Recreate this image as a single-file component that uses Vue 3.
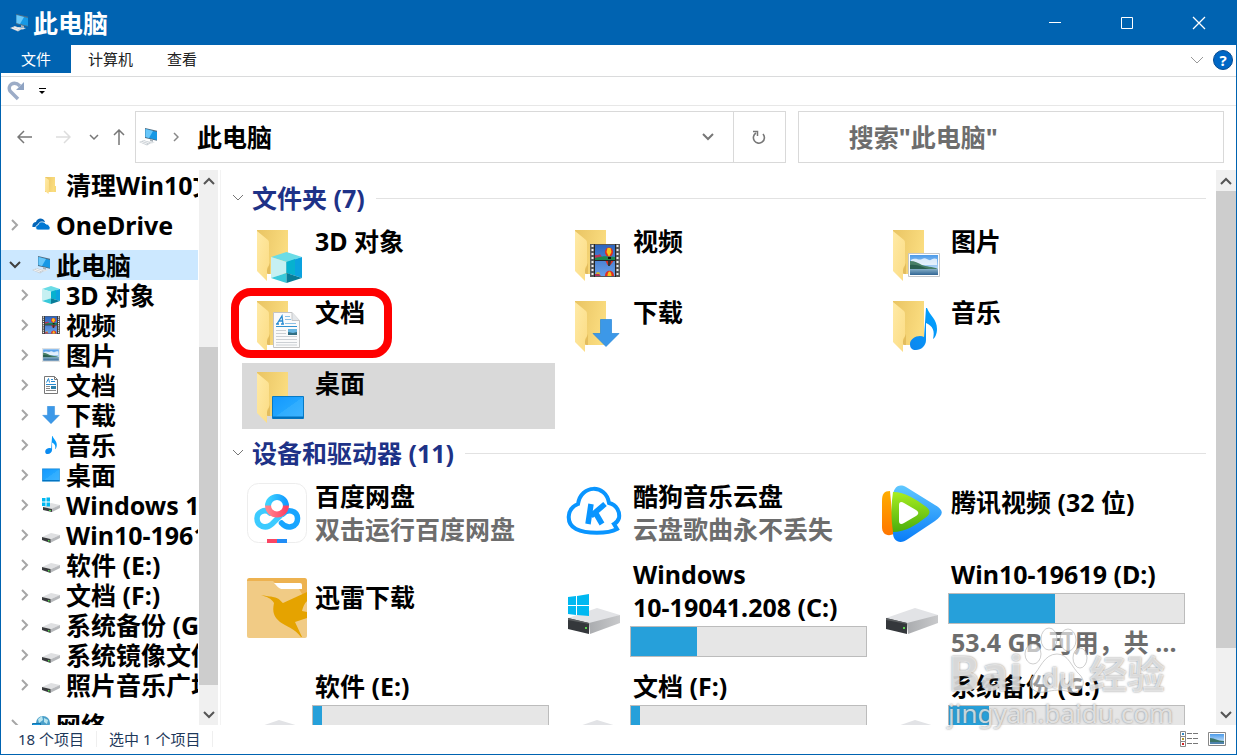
<script setup>
import { ref } from 'vue'

const search = ref('')

const tree = [
  { label: '清理Win10文件', icon: 'folder', level: 2, leaf: true },
  { label: 'OneDrive', icon: 'onedrive', level: 1, gap: true },
  { label: '此电脑', icon: 'pc', level: 1, gap: true, open: true },
  { label: '3D 对象', icon: 'cube', level: 2 },
  { label: '视频', icon: 'film', level: 2 },
  { label: '图片', icon: 'picture', level: 2 },
  { label: '文档', icon: 'smalldoc', level: 2 },
  { label: '下载', icon: 'down', level: 2 },
  { label: '音乐', icon: 'note', level: 2 },
  { label: '桌面', icon: 'desktop', level: 2 },
  { label: 'Windows 10-19041.208 (C:)', icon: 'windrive', level: 2 },
  { label: 'Win10-19619 (D:)', icon: 'drive', level: 2 },
  { label: '软件 (E:)', icon: 'drive', level: 2 },
  { label: '文档 (F:)', icon: 'drive', level: 2 },
  { label: '系统备份 (G:)', icon: 'drive', level: 2 },
  { label: '系统镜像文件 (H:)', icon: 'drive', level: 2 },
  { label: '照片音乐广场 (I:)', icon: 'drive', level: 2 },
  { label: '网络', icon: 'network', level: 1, gap: true }
]

const folders = [
  { name: '3D 对象', icon: 'cube', box: [23, 31, 31, 31] },
  { name: '视频', icon: 'film', box: [24, 23, 30, 33] },
  { name: '图片', icon: 'picture', box: [24, 32, 32, 24] },
  { name: '文档', icon: 'doc', box: [25, 20, 27, 36], marked: true },
  { name: '下载', icon: 'down', box: [26, 27, 28, 28] },
  { name: '音乐', icon: 'note', box: [26, 16, 27, 42] },
  { name: '桌面', icon: 'desktop', box: [24, 33, 32, 23], selected: true }
]

const devices = [
  { name: '百度网盘', icon: 'netdisk', note: '双击运行百度网盘' },
  { name: '酷狗音乐云盘', icon: 'kugou', note: '云盘歌曲永不丢失' },
  { name: '腾讯视频 (32 位)', icon: 'tencent' },
  { name: '迅雷下载', icon: 'xunlei' },
  { name: 'Windows\n10-19041.208 (C:)', icon: 'bigwindrive', used: 28 },
  { name: 'Win10-19619 (D:)', icon: 'bigdrive', used: 45, note: '53.4 GB 可用，共 97.6 GB' },
  { name: '软件 (E:)', icon: 'bigdrive', used: 4, note: '188 GB 可用，共 195 GB' },
  { name: '文档 (F:)', icon: 'bigdrive', used: 4, note: '188 GB 可用，共 195 GB' },
  { name: '系统备份 (G:)', icon: 'bigdrive', used: 17, note: '162 GB 可用，共 195 GB' }
]
</script>

<template>
  <div class="window">
    <svg class="sprite" aria-hidden="true">
      <defs>
        <linearGradient id="gBack" x1="0" x2="1" y1="0" y2="0.3"><stop offset="0" stop-color="#e9c463" /><stop offset="1" stop-color="#fadc7f" /></linearGradient>
        <linearGradient id="gFlap" x1="0" x2="1" y1="0" y2="1"><stop offset="0" stop-color="#ffeaa6" /><stop offset="1" stop-color="#fbdc84" /></linearGradient>
        <linearGradient id="gScreen" x1="0" x2="1" y1="0" y2="1"><stop offset="0" stop-color="#1398ff" /><stop offset="0.5" stop-color="#21a5ff" /><stop offset="0.51" stop-color="#2fadff" /><stop offset="1" stop-color="#3fb3ff" /></linearGradient>
        <linearGradient id="gSky" x1="0" x2="0" y1="0" y2="1"><stop offset="0" stop-color="#4d9be9" /><stop offset="1" stop-color="#e8f5ff" /></linearGradient>
        <linearGradient id="gSea" x1="0" x2="0" y1="0" y2="1"><stop offset="0" stop-color="#86afc8" /><stop offset="1" stop-color="#326694" /></linearGradient>
        <linearGradient id="gFilm" x1="0" x2="0" y1="0" y2="1"><stop offset="0" stop-color="#2d65bd" /><stop offset="1" stop-color="#69a0e8" /></linearGradient>
        <linearGradient id="gNote" x1="0" x2="1" y1="1" y2="0"><stop offset="0" stop-color="#0d86ee" /><stop offset="1" stop-color="#00a2ff" /></linearGradient>
        <linearGradient id="gBlueRing" x1="0" x2="1"><stop offset="0" stop-color="#3ed3ff" /><stop offset="1" stop-color="#139cff" /></linearGradient>
        <linearGradient id="gRedRing" x1="0" x2="1"><stop offset="0" stop-color="#ff838c" /><stop offset="1" stop-color="#ff4265" /></linearGradient>
        <linearGradient id="gTBlue" x1="0" x2="0" y1="0" y2="1"><stop offset="0" stop-color="#60c8ff" /><stop offset="1" stop-color="#087cf8" /></linearGradient>
        <linearGradient id="gTGreen" x1="0" x2="0" y1="0" y2="1"><stop offset="0" stop-color="#a9ed20" /><stop offset="1" stop-color="#4aae0d" /></linearGradient>
        <linearGradient id="gTOrange" x1="0" x2="0" y1="0" y2="1"><stop offset="0" stop-color="#ffad00" /><stop offset="1" stop-color="#ff7600" /></linearGradient>
        <linearGradient id="gMetal" x1="0" x2="1"><stop offset="0" stop-color="#aaacaf" /><stop offset="1" stop-color="#c8c9cb" /></linearGradient>
      </defs>

      <symbol id="i-cube" viewBox="0 0 31 31">
        <path d="M0 5 15.500 0 31 5 15.500 10Z" fill="#6bdce6" />
        <path d="M0 5 15.500 10v11L0 26Z" fill="#c6f0f2" />
        <path d="M31 5 15.500 10v11L31 26Z" fill="#0aa2df" />
        <path d="M15.500 10 24 7v16l-8.500-2Z" fill="#06b1cf" />
        <path d="M0 26 15.500 21v10Z" fill="#39c9da" />
        <path d="M31 26 15.500 21v10Z" fill="#087c98" />
      </symbol>

      <symbol id="i-film" viewBox="0 0 30 33" preserveAspectRatio="none">
        <path fill="#585858" d="M0 0h30v33H0z" />
        <path fill="url(#gFilm)" d="M5 1h20v15H5zM5 17h20v15H5z" />
        <path fill="#b9355b" d="m5 11 3 0 2-1 2 3 3 1v2H5z" /><path fill="#1b864e" d="M5 14c7-2 13-2 20-1v3H5z" />
        <ellipse cx="19" cy="8" rx="4" ry="4.500" fill="#e42b20" /><path d="M17.500 4h3l1 4-2 4h-1l-2-4z" fill="#f6c419" /><path d="M18 13h3v2h-3z" fill="#111" />
        <path d="m15.500 17 8 0-3 4h-3z" fill="#d82c22" /><path d="M18 17h3l-1 5h-2z" fill="#333" />
        <path d="M15 32c0-7 9-7 9 0z" fill="#e12e24" /><path d="M17.500 32c0-6 4-6 4 0z" fill="#f5c51d" /><circle cx="8" cy="30" r="2" fill="#d8b52d" /><path d="M5 30h4l2 2H5z" fill="#b2315a" />
        <path stroke="#eee" stroke-width="2" stroke-dasharray="2 2" d="M2.500 1v32M27.500 1v32" />
        <path fill="#242424" d="M4 0h1v33H4zM25 0h1v33h-1zM5 16h20v1H5z" />
      </symbol>

      <symbol id="i-picture" viewBox="0 0 32 24">
        <path fill="#fff" stroke="#c4c7ca" d="M.5.5h31v23H.5z" />
        <path fill="url(#gSky)" d="M2 2h28v20H2z" />
        <path fill="#fff" opacity=".75" d="M3 7c5-3 8 1 11-1s5 0 7 1 4-3 8-1v6H3z" />
        <path fill="#477f66" d="M2 8c5 0 8 2 12 4s10 1 16 4v1H2z" />
        <path fill="#295f4f" d="M2 12c8-1 14 3 19 4H2z" />
        <path fill="url(#gSea)" d="M2 16h28v6H2z" />
      </symbol>

      <symbol id="i-doc" viewBox="0 0 27 36">
        <path fill="#fafafa" stroke="#c4c4c4" d="M.5.5H19l7.500 8v27H.5z" /><path fill="#e4e7ea" stroke="#c4c6c8" d="M19 .5v8h7.500" />
        <path fill="none" stroke="#278bd2" stroke-width="1.300" d="m4 12 5-8 1 8M6 9h4M3 12h3M8 12h3" />
        <path stroke="#8cc0e4" d="M12 4.500h5M12 7.500h6M12 11.500h11" /><path stroke="#3091d0" d="M3 14.500h21" />
        <path stroke="#ccd0d4" d="M3 18.500h10M3 21.500h10M3 24.500h21M3 27.500h21M3 30.500h21M3 33h21" />
        <path fill="#66b6e2" d="M15 17h9v6h-9z" /><path fill="#326e82" d="m15 20 5 1 4-1v3h-9z" />
      </symbol>
      <symbol id="i-smalldoc" viewBox="0 0 18 18">
        <path fill="#fff" stroke="#777" d="M2.500.5h10l3 3v14h-13z" /><path fill="none" stroke="#777" d="M12.500.5v3h3" />
        <path fill="none" stroke="#278bd2" d="m4.500 6.500 2-4 1 4M9 3.500h2M9 5.500h4M4 8.500h10" />
        <path stroke="#888" d="M4 10.500h4M4 12.500h4M4 14.500h10" /><path fill="#2f82ac" d="M9 10h5v3H9z" />
      </symbol>

      <symbol id="i-down" viewBox="0 0 28 28"><path fill="#3c98e8" stroke="#2586d8" stroke-width=".7" d="M8.500.5h11v14H27L14 27.500 1 14.500h7.500z" /></symbol>
      <symbol id="i-note" viewBox="0 0 27 42"><path fill="url(#gNote)" d="M16 0h1c3 8 10 11 10 21 0 5-2 9-4 10 2-8 0-13-7-16v17c0 6-5 10-10 10-4 0-6-2-6-6 0-6 9-10 14-7z" /></symbol>
      <symbol id="i-desktop" viewBox="0 0 32 23"><path fill="url(#gScreen)" stroke="#087ac4" d="M.5.5h31v22H.5z" /><path stroke="#0070bd" stroke-width="2" d="M1 21.500h30" /></symbol>

      <symbol id="i-folder" viewBox="0 0 18 18"><path fill="url(#gBack)" d="M3 1h10v15H3z" /><path fill="#f8da79" d="M12 10h2v6h-2z" /><path fill="url(#gFlap)" d="m3 1 4 3v10l-.5 4L3 15z" /></symbol>

      <symbol id="i-onedrive" viewBox="0 0 18 18"><path fill="#0365b8" d="M.5 11C-.2 8 2 6 4 6c1-4 7-5 9 0-4 0-5 3-5 5z" /><path fill="#0078d4" stroke="#fff" stroke-width=".8" d="M6 14c-3 0-3-5 0-5 1-4 6-4 8-1 2 0 3 1 3 2 2 1 1 4-1 4z" /></symbol>

      <symbol id="i-pc" viewBox="0 0 18 18">
        <path fill="#516f85" d="M6 0 19 3v10L6 10z" /><path fill="#1698e5" d="m6.500 1 11.500 3v8L6.500 9z" /><path fill="#68c7fa" d="m6.500 1 7.500 2-4 7-3.500-1z" />
        <path fill="#a7b0b7" d="m11 11 3 1v2l-3-1z" /><path fill="#dfe3e6" d="m8 13 8 1-3 1.500-7-1z" /><path fill="#c9cfd4" d="m0 14 5-2 7 3-4 2.500z" /><path stroke="#fff" stroke-width=".7" d="m2 14 6 2M4 13l6 2" />
      </symbol>

      <symbol id="i-drive" viewBox="0 0 18 18"><path fill="#dfe0e2" d="m0 11 9-4 9 2-9 4z" /><path fill="#b7b9bc" d="M8 13.500 18 9v3l-10 5z" /><path fill="#393b3d" d="m0 11 8.500 2v4L0 14z" /><path fill="#50d14d" d="M6 14h1.500v1.500H6z" /></symbol>
      <symbol id="i-windrive" viewBox="0 0 18 18"><path fill="#dfe0e2" d="m1 11 8-4 9 2-8 4z" /><path fill="#b7b9bc" d="M9 13 18 9v3l-8 4z" /><path fill="#393b3d" d="m1 11 9 2v3l-9-2z" /><path fill="#50d14d" d="M7 14h2v1H7z" /><path fill="#00b8f1" d="M0 2h3.500v3.500H0zM4.500 1.500H8v4H4.500zM0 6.500h3.500V10H0zM4.500 6.500H8v4H4.500z" /></symbol>
      <symbol id="i-network" viewBox="0 0 18 18"><circle cx="11" cy="7" r="7" fill="#4b9fc9" /><path fill="#b9e5ef" d="m6 3 4-3 1 4-4 3zM12 2l4 2-1 4-3-2z" /><path fill="#1896df" stroke="#1475ac" d="M.5 7.500h8v8h-8z" /></symbol>

      <symbol id="i-netdisk" viewBox="0 0 64 64">
        <rect x="2.500" y="2.500" width="59" height="59" rx="11" fill="#fff" stroke="#ededed" />
        <g fill="none" stroke-width="5.500" stroke-linecap="round">
          <path d="M38 33c5-6 14-3 14.500 4 .5 9-10 12-16 5" stroke="#18a5ff" />
          <path d="M25 32c-5-5-13-1-13 5.500 0 8 9 11 15 5.500l11-11" stroke="#3ccbff" />
        </g>
        <g fill="none" stroke-width="6"><path d="M23 25a9 9 0 0 1 18 0" stroke="url(#gBlueRing)" /><path d="M23 24.500a9 9 0 0 0 18 0" stroke="url(#gRedRing)" /></g>
        <path fill="#fa4663" d="M22 58h10v4H22z" /><path fill="#218df5" d="M32 58h10v4H32z" />
      </symbol>

      <symbol id="i-kugou" viewBox="0 0 64 64">
        <path fill="none" stroke="#0995ff" stroke-width="4" d="M15 23C18 3 43 3 46 22c8 2 11 9 10 15-1 3-3 5-5 6l3 5c-9 5-31 5-41 0C3 43 3 28 15 23Z" />
        <path fill="none" stroke="#0995ff" stroke-width="5.500" d="m28 23-3 20M42 23 28 35M32 31l7 12" />
      </symbol>

      <symbol id="i-tencent" viewBox="0 0 64 64">
        <path fill="url(#gTOrange)" d="M9 10c-6 0-8 3-8 10v26c0 7 5 10 12 7z" />
        <path fill="url(#gTBlue)" d="M12 16c0-9 5-14 13-10l29 18c10 6 8 10 0 16L27 58c-8 6-15 2-15-6z" />
        <path fill="url(#gTGreen)" d="M12 11c12 0 24 8 32 14 6 4 6 8 0 12-9 7-20 14-32 14-2-13-2-27 0-40z" />
        <path fill="#fff" d="M18 24c0-3 2-4 5-2l12 7c3 2 3 4 0 6l-12 7c-3 2-5 1-5-2z" />
      </symbol>

      <symbol id="i-xunlei" viewBox="0 0 64 64">
        <rect x="2" y="2" width="60" height="60" rx="2" fill="#f1cb85" /><path fill="#edb250" d="M4 2h56l2 2v22L54 13H36l-8-8H2V4z" />
        <path fill="#fff" d="M29 7h26q2 0 2 2v4H36c-3-1-4-3-7-6z" />
        <path fill="#e5a300" d="M16 19c9 2 9 1 12 2 7 1 8 5 10 6l24-11v9c-3 3-4 6-5 10l5 1v6l-12 4 7 15h-1c-6-8-15-11-21-15-6-5-8-10-6-19-3-5-7-6-13-8z" />
      </symbol>

      <symbol id="i-bigdrive" viewBox="0 0 64 64">
        <path fill="#e2e3e6" d="M5 42 34 32l23 7-27 11z" /><path fill="url(#gMetal)" d="M26 47 57 39v8L27 58z" /><path fill="#34373b" d="m5 42 21 5v11L5 53z" /><path fill="#5b5e60" d="m5 42 21 5v1L5 44z" /><path fill="#59d24d" d="M22 51h2v2h-2z" />
      </symbol>
      <symbol id="i-bigwindrive" viewBox="0 0 64 64">
        <use href="#i-bigdrive" /><path fill="#00b8f1" d="m5 21 8-1v9H5zM14 20l12-2v11H14zM5 30h8v9l-8-1zM14 30h12v10l-12-1z" />
      </symbol>
    </svg>

    <header class="titlebar">
      <svg class="icon18"><use href="#i-pc" /></svg>
      <h1>此电脑</h1>
      <div class="controls">
        <button aria-label="最小化"><svg width="14" height="14"><path d="M1 6.500h12" stroke="#fff" /></svg></button>
        <button aria-label="最大化"><svg width="14" height="14"><path d="M1.500 1.500h11v11h-11z" fill="none" stroke="#fff" /></svg></button>
        <button aria-label="关闭"><svg width="14" height="14"><path d="m1 1 12 12M13 1 1 13" stroke="#fff" stroke-width="1.300" /></svg></button>
      </div>
    </header>

    <nav class="tabs">
      <button class="tab active">文件</button>
      <button class="tab">计算机</button>
      <button class="tab">查看</button>
      <div class="tab-tools">
        <button aria-label="展开功能区"><svg width="14" height="10"><path d="m1 2 6 6 6-6" fill="none" stroke="#999" /></svg></button>
        <button class="help" aria-label="帮助">?</button>
      </div>
    </nav>

    <div class="quick">
      <button aria-label="恢复"><svg width="18" height="20"><path d="M11 18 3 10C0 4 7-1 13 5" fill="none" stroke="#9cacc7" stroke-width="3.500" /><path d="M17 1v8H9z" fill="#8fa3c3" /></svg></button>
      <button aria-label="自定义快速访问工具栏"><svg width="8" height="8"><path d="M0 1.500h7" stroke="#000" /><path d="M0 4h6L3 7z" /></svg></button>
    </div>

    <div class="address-row">
      <div class="history">
        <button aria-label="后退"><svg width="16" height="14"><path d="M15 7H1m6-6L1 7l6 6" fill="none" stroke="#777" stroke-width="1.500" /></svg></button>
        <button aria-label="前进"><svg width="16" height="14"><path d="M1 7h14M9 1l6 6-6 6" fill="none" stroke="#ddd" stroke-width="1.500" /></svg></button>
        <button class="recent" aria-label="最近位置"><svg width="10" height="8"><path d="m1 2 4 4 4-4" fill="none" stroke="#777" stroke-width="1.500" /></svg></button>
        <button class="up" aria-label="上移"><svg width="12" height="16"><path d="M6 16V1M1 6l5-5 5 5" fill="none" stroke="#777" stroke-width="1.500" /></svg></button>
      </div>
      <div class="address">
        <svg class="icon18"><use href="#i-pc" /></svg>
        <svg class="crumb" width="6" height="10"><path d="m1 1 4 4-4 4" fill="none" stroke="#888" stroke-width="1.500" /></svg>
        <span class="location">此电脑</span>
        <button class="drop" aria-label="以前的位置"><svg width="12" height="8"><path d="m1 1 5 5 5-5" fill="none" stroke="#777" stroke-width="2" /></svg></button>
        <button class="refresh" aria-label="刷新"><svg width="14" height="15"><path d="M4 3a5.500 5.500 0 1 0 7 1" fill="none" stroke="#777" stroke-width="1.600" /><path d="M1 1.500h4.500V6" fill="none" stroke="#777" stroke-width="1.500" /></svg></button>
      </div>
      <input v-model="search" class="search" type="text" aria-label="搜索" placeholder="搜索&quot;此电脑&quot;" />
    </div>

    <div class="body">
      <aside class="sidebar">
        <ul class="tree">
          <li v-for="(n, i) in tree" :key="i" :class="['node', 'level' + n.level, { gap: n.gap, open: n.open }]">
            <button v-if="!n.leaf" class="expander" :aria-label="'展开 ' + n.label">
              <svg v-if="n.open" width="12" height="8"><path d="m1 1 5 5 5-5" fill="none" stroke="#404040" stroke-width="2" /></svg>
              <svg v-else width="8" height="12"><path d="m1 1 5 5-5 5" fill="none" stroke="#a6a6a6" stroke-width="2" /></svg>
            </button>
            <a href="#"><svg class="icon18"><use :href="'#i-' + n.icon" /></svg><span>{{ n.label }}</span></a>
          </li>
        </ul>
        <div class="scrollbar side">
          <button aria-label="向上滚动"><svg width="12" height="8"><path d="m1 7 5-5 5 5" fill="none" stroke="#555" stroke-width="2" /></svg></button>
          <div class="track"><div class="thumb"></div></div>
          <button aria-label="向下滚动"><svg width="12" height="8"><path d="m1 1 5 5 5-5" fill="none" stroke="#555" stroke-width="2" /></svg></button>
        </div>
      </aside>

      <main class="content">
        <section>
          <h2><svg width="12" height="8"><path d="m1 1 5 5 5-5" fill="none" stroke="#777" /></svg>文件夹 (7)</h2>
          <div class="folders">
            <button v-for="f in folders" :key="f.name" :class="['tile', { selected: f.selected, marked: f.marked }]">
              <svg class="pic" viewBox="0 0 64 66">
                <path fill="url(#gBack)" d="M9 9h31v44H20L9 40z" /><path fill="#d5a949" opacity=".55" d="m19 49 3-7v11h-3z" />
                <path fill="url(#gFlap)" d="m9 10 11 9q1 1 1 3v22l-2 3v13L9 50z" />
                <use :href="'#i-' + f.icon" :x="f.box[0]" :y="f.box[1]" :width="f.box[2]" :height="f.box[3]" />
              </svg>
              <span class="name">{{ f.name }}</span>
            </button>
          </div>
        </section>
        <section>
          <h2 class="second"><svg width="12" height="8"><path d="m1 1 5 5 5-5" fill="none" stroke="#777" /></svg>设备和驱动器 (11)</h2>
          <div class="devices">
            <button v-for="d in devices" :key="d.name" class="tile device">
              <svg class="pic64"><use :href="'#i-' + d.icon" /></svg>
              <span :class="['info', { single: !d.note && !d.used }]">
                <span class="name">{{ d.name }}</span>
                <span v-if="d.used" class="bar" role="progressbar" aria-label="已用空间" :aria-valuenow="d.used" aria-valuemin="0" aria-valuemax="100"><span class="fill" :style="{ width: d.used + '%' }"></span></span>
                <span v-if="d.note" class="note">{{ d.note }}</span>
              </span>
            </button>
          </div>
        </section>
      </main>

      <div class="scrollbar mainbar">
        <button aria-label="向上滚动"><svg width="12" height="8"><path d="m1 7 5-5 5 5" fill="none" stroke="#555" stroke-width="2" /></svg></button>
        <div class="track"><div class="thumb"></div></div>
        <button aria-label="向下滚动"><svg width="12" height="8"><path d="m1 1 5 5 5-5" fill="none" stroke="#555" stroke-width="2" /></svg></button>
      </div>

      <div class="watermark" aria-hidden="true">
        <div class="brand">
          <span>Bai</span>
          <span class="paw">
            <svg width="66" height="70" viewBox="0 0 64 70"><g fill="#fff" fill-opacity=".6" stroke="#b9b9b9" stroke-opacity=".7"><ellipse cx="25" cy="13" rx="8" ry="11" /><ellipse cx="44" cy="14" rx="8" ry="11" /><ellipse cx="9" cy="28" rx="8" ry="10" /><ellipse cx="56" cy="32" rx="7" ry="10" /><path d="M33 28c12 0 14 13 23 21 8 9 0 19-10 17-9-3-16-2-25 0-12 2-19-7-12-16 7-7 11-22 24-22z" /></g></svg>
            <span class="du">du</span>
          </span>
          <span class="cn">经验</span>
        </div>
        <div class="url">jingyan.baidu.com</div>
      </div>
    </div>

    <footer class="status">
      <span>18 个项目</span>
      <span>选中 1 个项目</span>
      <div class="views">
        <button aria-label="详细信息"><svg width="18" height="16"><path d="M.5.5h5v5h-5zM.5 5.500h5v5h-5zM.5 10.500h5v5h-5z" fill="#fff" stroke="#888" /><path d="M2 2h2v2H2z" fill="#378ac4" /><path d="M2 7h2v2H2z" fill="#b49a31" /><path d="M2 12h2v2H2z" fill="#d12525" /><path d="M7 2.500h5m1 0h5M7 7.500h5m1 0h5M7 12.500h5m1 0h5" stroke="#777" /></svg></button>
        <button aria-label="大缩略图"><svg width="18" height="14"><path d="M.5.5h17v13H.5z" fill="#fff" stroke="#888" /><path d="M2 2h14v10H2z" fill="url(#gSky)" /><path d="M2 6c5 0 7 3 14 3v3H2z" fill="#3b7468" /><path d="M2 10h14v2H2z" fill="#4d82ac" /></svg></button>
      </div>
    </footer>
  </div>
</template>

<style>
body { margin: 0; overflow: hidden; }
</style>

<style scoped>
.window { box-sizing: border-box; height: 100vh; display: flex; flex-direction: column; border: 1px solid #0063b1; border-top: 0; background: #fff; color: #000; font: 700 25px/34px "Noto Sans", "Noto Sans CJK SC", sans-serif; }
.sprite { position: absolute; width: 0; height: 0; }
button { border: 0; padding: 0; margin: 0; background: none; font: inherit; color: inherit; display: flex; align-items: center; justify-content: center; }
svg { display: block; flex: none; }
.icon18 { width: 18px; height: 18px; }
.titlebar { flex: none; height: 45px; display: flex; align-items: center; background: #0063b1; color: #fff; padding: 0 1px 0 9px; }
h1 { margin: 0 0 0 5px; font: inherit; }
.controls { margin-left: auto; display: flex; height: 100%; }
.controls button { width: 72px; }
.tabs { flex: none; height: 31px; display: flex; align-items: flex-start; border-bottom: 1px solid #dadbdc; font-weight: 400; font-size: 15px; color: #222; }
.tab { height: 28px; padding: 0 17px; line-height: 28px; }
.tab.active { background: #0063b1; color: #fff; padding: 0 20px; }
.tab-tools { margin-left: auto; display: flex; align-items: center; height: 30px; gap: 9px; padding-right: 3px; }
.help { width: 20px; height: 20px; border-radius: 50%; background: #0067c5; border: 1px solid #064b91; color: #fff; line-height: 18px; font-weight: 700; }
.quick { flex: none; height: 28px; border-bottom: 1px solid #e7e7e7; display: flex; align-items: center; gap: 14px; padding-left: 6px; }
.address-row { flex: none; display: flex; height: 52px; padding: 5px 12px 7px 0; }
.history { width: 134px; display: flex; align-items: center; padding-left: 16px; box-sizing: border-box; gap: 22px; }
.history .recent { margin-left: -4px; }
.history .up { margin-left: -8px; }
.address { flex: 649; display: flex; align-items: center; border: 1px solid #d9d9d9; padding-left: 3px; box-sizing: border-box; min-width: 0; }
.crumb { margin: 0 18px 0 16px; }
.drop { margin-left: auto; width: 50px; height: 100%; }
.refresh { width: 52px; height: 100%; border-left: 1px solid #d9d9d9; box-sizing: border-box; }
.search { flex: 326; min-width: 0; margin-left: 12px; border: 1px solid #d9d9d9; padding: 0 50px; box-sizing: border-box; font: inherit; color: #000; background: #fff; }
.search::placeholder { color: #6d6d6d; opacity: 1; }
.body { flex: 1; min-height: 0; display: flex; position: relative; }
.sidebar { width: 219px; flex: none; display: flex; border-right: 1px solid #f3f3f3; }
.tree { flex: 1; min-width: 0; margin: 0; padding: 0; list-style: none; overflow: hidden; }
.node { display: flex; align-items: center; height: 30px; line-height: 30px; }
.node a { display: flex; align-items: center; gap: 6px; color: inherit; text-decoration: none; white-space: nowrap; }
.gap { margin-top: 10px; }
.open { background: #cce8ff; }
.expander { width: 12px; flex: none; }
.level1 { padding-left: 8px; }
.level1 a { margin-left: 11px; }
.level2 { padding-left: 18px; }
.level2 a { margin-left: 11px; }
.level2 > a:first-child { margin-left: 23px; }
.scrollbar { flex: none; display: flex; flex-direction: column; background: #f0f0f0; width: 19px; }
.scrollbar button { height: 21px; flex: none; }
.track { flex: 1; display: flex; flex-direction: column; }
.thumb { background: #cdcdcd; }
.side { margin: 0 2px 0 1px; }
.side .track { padding-top: 156px; }
.side .thumb { height: 338px; }
.mainbar { width: 20px; }
.mainbar .thumb { height: 457px; }
.content { flex: 1; min-width: 0; overflow: hidden; }
h2 { margin: 11px 10px 6px 11px; display: flex; align-items: center; gap: 8px; font: inherit; color: #1e3287; }
h2::after { content: ""; height: 1px; background: #e2e2e2; flex: 1; margin-left: 3px; }
h2.second { margin-top: 7px; }
.folders, .devices { display: grid; grid-template-columns: repeat(auto-fill, 313px); gap: 5px; padding-left: 21px; }
.tile { position: relative; display: flex; align-items: flex-start; justify-content: flex-start; text-align: left; height: 66px; padding-left: 6px; }
.pic { width: 64px; height: 66px; }
.pic64 { width: 64px; height: 64px; margin-left: -3px; }
.folders .name { margin: 3px 0 0 3px; }
.selected { background: #d9d9d9; }
.marked::after { content: ""; position: absolute; box-sizing: border-box; left: -11px; top: -4px; width: 161px; height: 70px; border: 8px solid #f00; border-radius: 20px; }
.devices { grid-template-rows: 66px 100px 100px; gap: 12px 5px; padding-top: 4px; }
.device { height: auto; align-items: center; }
.info { flex: 1; min-width: 0; display: flex; flex-direction: column; line-height: 33px; padding: 0 1px 0 3px; }
.info > .name { white-space: pre-line; }
.info > .name, .info > .note { padding-left: 3px; }
.single { padding-bottom: 22px; }
.note { color: #6d6d6d; overflow: hidden; text-overflow: ellipsis; white-space: nowrap; }
.bar { display: block; width: 235px; height: 29px; border: 1px solid #bcbcbc; background: #e6e6e6; margin: 2px 0; }
.fill { display: block; height: 100%; background: #26a0da; }
.watermark { position: absolute; right: 64px; bottom: -5px; width: 224px; color: rgba(255, 255, 255, 0.7); text-shadow: 0 0 2px rgba(100, 100, 100, 0.8); pointer-events: none; }
.brand { display: flex; align-items: flex-end; font-size: 48px; line-height: 46px; }
.paw { position: relative; width: 66px; }
.du { position: absolute; left: 19px; bottom: 3px; font-size: 26px; line-height: 30px; }
.cn { font-size: 38px; }
.url { font-weight: 400; font-size: 26px; line-height: 34px; }
.status { flex: none; box-sizing: border-box; height: 29px; display: flex; align-items: center; font-weight: 400; font-size: 15px; color: #1e395b; padding: 0 10px 2px 17px; }
.status > span { border-right: 1px solid #efefef; padding-right: 12px; margin-right: 12px; line-height: 16px; }
.views { margin-left: auto; display: flex; gap: 10px; }
</style>
